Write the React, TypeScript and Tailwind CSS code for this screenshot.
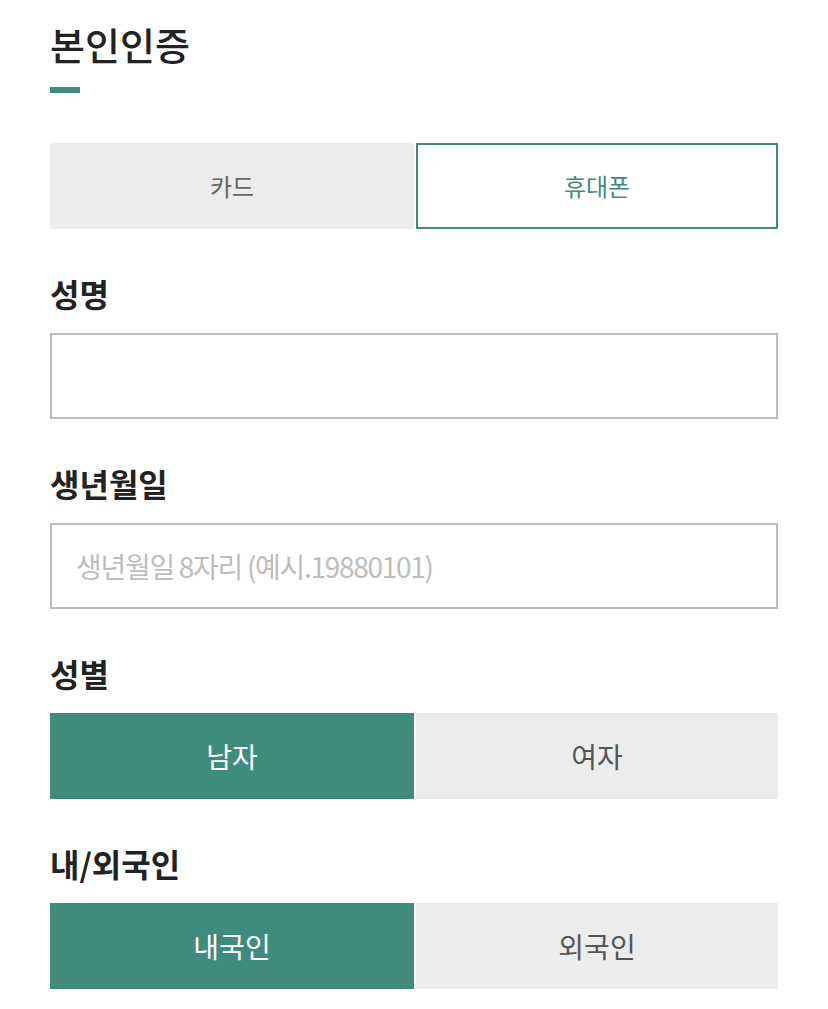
import React from "react";

const font = { fontFamily: '"Noto Sans CJK KR", "Noto Sans", sans-serif' };

function Label({ children }: { children: React.ReactNode }) {
  return (
    <div className="mt-[44px] mb-[20px] text-[32px] leading-[40px] font-bold text-[#222222]">
      {children}
    </div>
  );
}

function Toggle({ left, right }: { left: string; right: string }) {
  return (
    <div className="flex gap-[2px]">
      <button className="w-[364px] h-[86px] bg-[#3f8c7e] text-white text-[28px] flex items-center justify-center">
        {left}
      </button>
      <button className="flex-1 h-[86px] bg-[#ececec] text-[#555555] text-[28px] flex items-center justify-center">
        {right}
      </button>
    </div>
  );
}

export default function App() {
  return (
    <div className="bg-white min-h-[1009px] px-[50px] w-[828px]" style={font}>
      <h1 className="pt-[24px] text-[38px] leading-[40px] font-medium text-[#222222]">본인인증</h1>
      <div className="mt-[23px] w-[30px] h-[6px] bg-[#3f8c7e]" />
      <div className="mt-[50px] flex gap-[2px]">
        <button className="w-[364px] h-[86px] bg-[#ececec] text-[#666666] text-[24px] flex items-center justify-center">
          카드
        </button>
        <button className="flex-1 h-[86px] bg-white border-2 border-[#3f8c7e] text-[#3f8c7e] text-[24px] flex items-center justify-center">
          휴대폰
        </button>
      </div>

      <Label>성명</Label>
      <input className="block w-full h-[86px] border-2 border-[#bdbdbd] px-[26px] text-[28px] outline-none" />

      <Label>생년월일</Label>
      <input
        className="block w-full h-[86px] border-2 border-[#bdbdbd] px-[24px] text-[28px] tracking-[-1.3px] outline-none placeholder:text-[#bdbdbd]"
        placeholder="생년월일 8자리 (예시.19880101)"
      />

      <Label>성별</Label>
      <Toggle left="남자" right="여자" />

      <Label>내/외국인</Label>
      <Toggle left="내국인" right="외국인" />
    </div>
  );
}
